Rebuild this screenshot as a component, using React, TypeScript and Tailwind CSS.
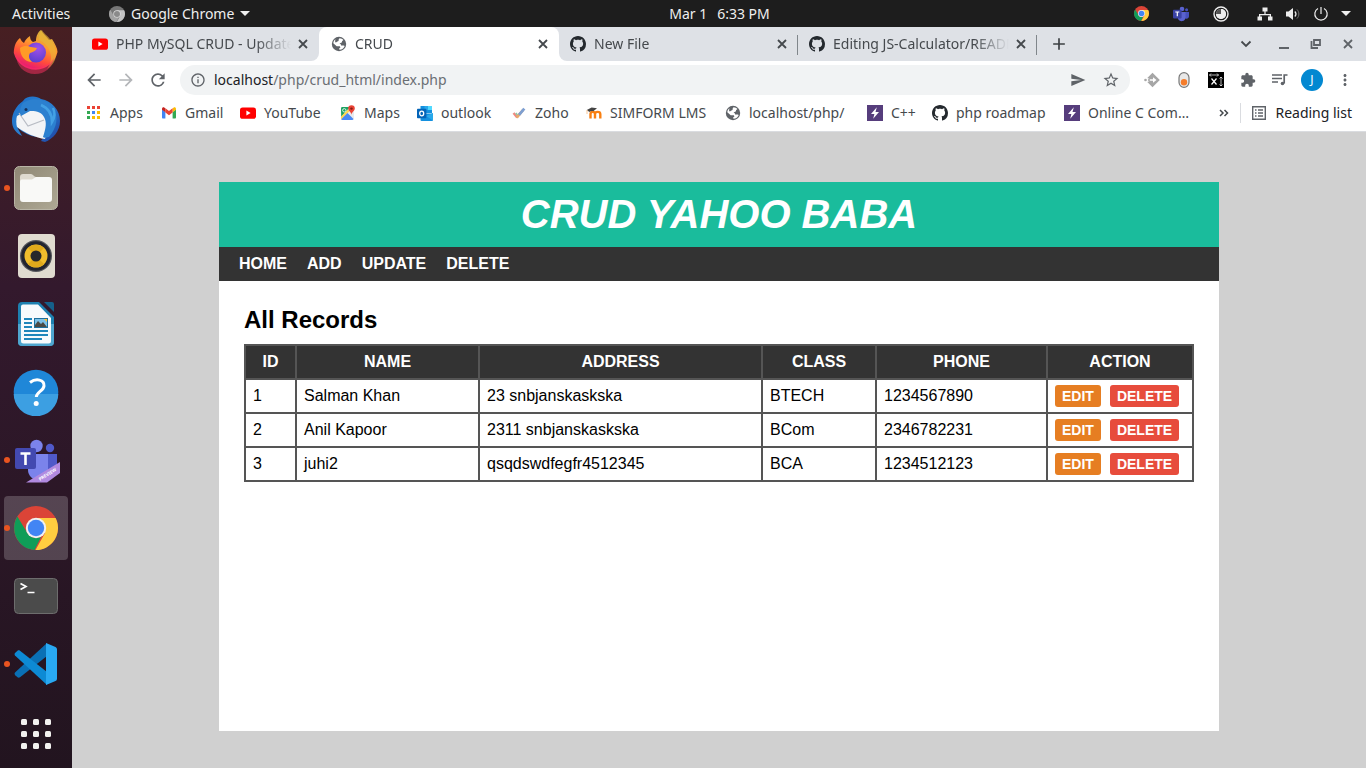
import type { ReactNode } from "react";
import {
  MdArrowBack,
  MdArrowForward,
  MdRefresh,
  MdInfoOutline,
  MdSend,
  MdStarBorder,
  MdExtension,
  MdMoreVert,
  MdAdd,
} from "react-icons/md";

/* ---------- small icons ---------- */

function Youtube() {
  return (
    <svg className="h-4 w-4 shrink-0" viewBox="0 0 16 16">
      <rect x="0" y="2.4" width="16" height="11.4" rx="2.6" fill="#f00" />
      <path d="M6.4 5.6v5l4.2-2.5z" fill="#fff" />
    </svg>
  );
}

function Globe() {
  return (
    <svg className="h-4 w-4 shrink-0" viewBox="0 0 16 16">
      <circle cx="8" cy="8" r="7.2" fill="#5f6368" />
      <path
        d="M8.6 2.2c1.5 0 2.9.7 3.8 1.8L11 5.2c.2 1-.5 1.6-1.5 1.7l-1 .9c1.5.2 1.7.9 1.5 1.8H12.7l1 .3c-.8 2.2-2.7 3.9-5.2 3.9l-.4-1.2 1.3-1.1-.5-1.200H5.7L2.3 7.2C2.4 5.6 3.2 4.2 4.4 3.3l-.3 2.2c.2 1 .9 1.2 1.5.6.5-.8 1.2-.7 1.9-1.1.4-.7-.1-1.4.4-2z"
        fill="#fff"
      />
    </svg>
  );
}

function Github() {
  return (
    <svg className="h-4 w-4 shrink-0" viewBox="0 0 16 16" fill="#24292e">
      <path d="M8 0C3.58 0 0 3.58 0 8c0 3.54 2.29 6.53 5.47 7.59.4.07.55-.17.55-.38 0-.19-.01-.82-.01-1.49-2.01.37-2.53-.49-2.69-.94-.09-.23-.48-.94-.82-1.13-.28-.15-.68-.52-.01-.53.63-.01 1.08.58 1.23.82.72 1.21 1.87.87 2.33.66.07-.52.28-.87.51-1.07-1.78-.2-3.64-.89-3.64-3.95 0-.87.31-1.59.82-2.15-.08-.2-.36-1.02.08-2.12 0 0 .67-.21 2.2.82.64-.18 1.32-.27 2-.27.68 0 1.36.09 2 .27 1.53-1.04 2.2-.82 2.2-.82.44 1.1.16 1.92.08 2.12.51.56.82 1.27.82 2.15 0 3.07-1.87 3.75-3.65 3.95.29.25.54.73.54 1.48 0 1.07-.01 1.93-.01 2.2 0 .21.15.46.55.38A8.01 8.01 0 0 0 16 8c0-4.42-3.58-8-8-8z" />
    </svg>
  );
}

function AppsIcon() {
  const colors = ["#ea4335", "#ea4335", "#ea4335", "#34a853", "#4285f4", "#fbbc04", "#34a853", "#fbbc04", "#fbbc04"];
  return (
    <svg className="h-4 w-4 shrink-0" viewBox="0 0 16 16">
      {colors.map((c, i) => (
        <rect key={i} x={1 + (i % 3) * 5} y={1 + Math.floor(i / 3) * 5} width="3" height="3" fill={c} />
      ))}
    </svg>
  );
}

function Gmail() {
  return (
    <svg className="h-4 w-4 shrink-0" viewBox="0 0 16 16">
      <path d="M1 4.5v8c0 .5.4 1 1 1h2.4V7z" fill="#4285f4" />
      <path d="M11.6 13.5H14c.6 0 1-.5 1-1v-8L11.6 7z" fill="#34a853" />
      <path d="M11.6 3.4V7.2L15 4.7V3.9c0-1.4-1.5-2-2.5-1.2z" fill="#fbbc04" />
      <path d="M4.4 7.6V3.2L8 5.9l3.6-2.7v4.4L8 10.3z" fill="#ea4335" />
      <path d="M1 3.9v.8l3.4 2.6V3.4l-.9-.7C2.5 1.9 1 2.5 1 3.9z" fill="#c5221f" />
    </svg>
  );
}

function Maps() {
  return (
    <svg className="h-4 w-4 shrink-0" viewBox="0 0 16 16">
      <rect x="1" y="2" width="13" height="13" rx="1.4" fill="#e8eaed" />
      <path d="M1 3.4C1 2.6 1.6 2 2.4 2H10L1.2 12z" fill="#1ea362" />
      <path d="M1 11.5l7-7L9.7 6 1 14.5z" fill="#ffd64f" />
      <path d="M1.2 14.2l6.3-6.3 6 6.1c-.3.7-.7 1-1.3 1H2.3c-.6 0-.9-.3-1.100-.8z" fill="#4a89f3" />
      <circle cx="4.3" cy="5.3" r="1.7" fill="none" stroke="#fff" strokeWidth=".8" />
      <path d="M11.5.3a3.3 3.3 0 0 0-3.3 3.3c0 2.4 2.7 3 3.3 6.2.6-3.2 3.300-3.800 3.300-6.200A3.300 3.300 0 0 0 11.500.3z" fill="#ea4335" />
      <circle cx="11.5" cy="3.6" r="1.2" fill="#851b14" />
    </svg>
  );
}

function Outlook() {
  return (
    <svg className="h-4 w-4 shrink-0" viewBox="0 0 16 16">
      <path d="M3.5 1H15v7H3.5z" fill="#1490df" />
      <path d="M7.500 1H15v4H7.500z" fill="#28a8ea" />
      <path d="M11 1h4v4h-4z" fill="#50d9ff" />
      <path d="M3.5 8.500H16V15a1 1 0 0 1-1 1H4.500a1 1 0 0 1-1-1z" fill="#1490df" />
      <path d="M16 8v7.500L9 11z" fill="#28a8ea" />
      <rect x="0" y="3.8" width="9.4" height="9.4" rx=".8" fill="#0364b8" />
      <ellipse cx="4.7" cy="8.5" rx="2" ry="2.300" fill="none" stroke="#fff" strokeWidth="1.3" />
    </svg>
  );
}

function Zoho() {
  return (
    <svg className="h-4 w-4 shrink-0" viewBox="0 0 16 16" fill="none">
      <path d="M2.500 8l3.700 4.500" stroke="#ef8a80" strokeWidth="2.400" />
      <path d="M4.800 8l2 2.500" stroke="#8ec9a0" strokeWidth="1.600" />
      <path d="M5.800 12.600L12 5" stroke="#e9a96a" strokeWidth="2.600" />
      <path d="M8 9.800l5.300-6.200" stroke="#7d9fd2" strokeWidth="2.800" />
    </svg>
  );
}

function Moodle() {
  return (
    <svg className="h-4 w-4 shrink-0" viewBox="0 0 16 16" fill="none">
      <path d="M4.500 13.500V9c0-2.900 4.500-2.900 4.500 0v4.500M9 9c0-2.900 5.300-2.900 5.300 0v4.500" stroke="#f98012" strokeWidth="2.400" />
      <path d="M.8 5l4.800-2.600L11 3.200 7.300 6.200c-1.600-.6-2.800-.3-3.900.8z" fill="#444" />
      <path d="M1 5v4" stroke="#f7b77c" strokeWidth=".8" />
    </svg>
  );
}

function Bolt() {
  return (
    <svg className="h-4 w-4 shrink-0" viewBox="0 0 16 16">
      <rect width="16" height="16" fill="#563d7c" />
      <path d="M9.800 2.200L4 9h3.400l-1.200 4.800L12 7H8.500z" fill="#fff" />
    </svg>
  );
}

function ChromeLogo({ className, muted = false }: { className: string; muted?: boolean }) {
  const [r, y, g, b] = muted ? ["#777", "#c4c4c4", "#a2a2a2", "#8a8a8a"] : ["#db4437", "#ffcd40", "#0f9d58", "#4285f4"];
  return (
    <svg className={className} viewBox="0 0 44 44">
      <circle cx="22" cy="22" r="22" fill={r} />
      <path d="M22 12h19.600A22 22 0 0 1 21.500 44L31 27z" fill={y} />
      <path d="M3.400 10.500L13.300 27c2 3.500 5.200 5 8.700 5l5-.9L20.500 44A22 22 0 0 1 3.400 10.500z" fill={g} />
      <circle cx="22" cy="22" r="10.200" fill={muted ? "#ddd" : "#f1f1f1"} />
      <circle cx="22" cy="22" r="8.200" fill={b} />
    </svg>
  );
}

function TeamsTray() {
  return (
    <svg className="size-4" viewBox="0 0 16 16">
      <circle cx="9" cy="3" r="2.300" fill="#5a62cf" />
      <circle cx="13.600" cy="3.800" r="1.500" fill="#4650bd" />
      <path d="M11 6h5v4.500a2.500 2.500 0 0 1-4 1.700z" fill="#4650bd" />
      <path d="M5 6h7.500v5.500a4 4 0 0 1-7.500 1.600z" fill="#5a62cf" />
      <rect x="0" y="3.800" width="8.600" height="8.600" rx=".8" fill="#3b43a6" />
      <path d="M2.300 6h4M4.300 6v4.300" stroke="#fff" strokeWidth="1.200" />
    </svg>
  );
}

function Cross({ className }: { className: string }) {
  return (
    <svg className={className} viewBox="0 0 16 16" stroke="currentColor" strokeWidth="1.800">
      <path d="M4 4l8 8M12 4l-8 8" />
    </svg>
  );
}

/* ---------- dock icons ---------- */

function Firefox() {
  return (
    <svg className="size-12" viewBox="0 0 48 48">
      <defs>
        <linearGradient id="fx" x1=".8" y1="0" x2=".35" y2="1">
          <stop offset="0" stopColor="#c9b33f" />
          <stop offset=".4" stopColor="#ff9a2e" />
          <stop offset=".72" stopColor="#ff4a3d" />
          <stop offset="1" stopColor="#e4127c" />
        </linearGradient>
        <radialGradient id="fxc" cx=".6" cy=".3" r=".7">
          <stop offset="0" stopColor="#a050e8" />
          <stop offset="1" stopColor="#5b3fd0" />
        </radialGradient>
      </defs>
      <path d="M8 10c1 2 2 4 4 5 1-3 3-5 6-7 0 3 1 5 3 6l3-1c0-5 2-9 5-11 2 4 5 6 8 10l3-1c3 5 5.500 9 5.500 13A22.500 22.500 0 0 1 1.800 25C2 18 4 13 8 10z" fill="url(#fx)" />
      <path d="M27 12c-1-4 1-8 3-10 2 5 14 10 14 24 0 7-4 12-9 15 4-6 5-11 3-17-2-7-7-10-11-12z" fill="#e8b838" opacity=".6" />
      <circle cx="24" cy="24.500" r="10" fill="url(#fxc)" />
      <path d="M8 20c4-3 8-2 11-1l6 1c-1 3-4 4-7 5-2 3-1 6 2 9-7 0-12-6-12-14z" fill="#ff9b27" />
      <path d="M4 26c3 9 11 14 20 14 8 0 14-4 18-10-2 10-9 16-19 16C12 46 4 38 4 26z" fill="#ff2f62" opacity=".5" />
    </svg>
  );
}

function Thunderbird() {
  return (
    <svg className="size-12" viewBox="0 0 48 48">
      <defs>
        <linearGradient id="tb" x1="0" y1="0" x2="1" y2="1">
          <stop offset="0" stopColor="#1c6fc9" />
          <stop offset=".5" stopColor="#2a7ecf" />
          <stop offset="1" stopColor="#1e3fa0" />
        </linearGradient>
      </defs>
      <path d="M11 5c4-6 14-5 18-2 11 2 19 11 19 22 0 10-7 18-15 21l-4-1 4-5C23 43 12 38 5 31l5 9C2 36 0 30 0 25 0 17 4 10 11 5z" fill="url(#tb)" />
      <path d="M5 20l9-5 18-2c4 5 5 20 1 30-9-1-20-6-28-12-1-3-1-8 0-11z" fill="#f3f4f6" />
      <path d="M7 17l9 13 16-6" fill="none" stroke="#b8bcc4" strokeWidth="1.200" />
      <path d="M11 7c9-7 24-4 30 5 6 8 4 20-4 29-4 1-5 1-6 0 3-9 4-15 1-20-3-6-10-6-14-6L9 20c-2-5 0-10 2-13z" fill="#2c80cf" />
      <path d="M29 9c7 3 11 9 11 17 3-5 3-10 1-14" fill="none" stroke="#43a1e5" strokeWidth="2.500" />
      <circle cx="14" cy="13.500" r="1.500" fill="#14305c" />
    </svg>
  );
}

function Files() {
  return (
    <svg className="size-12" viewBox="0 0 48 48">
      <defs>
        <linearGradient id="fl" x1="0" y1="0" x2="1" y2="1">
          <stop offset="0" stopColor="#8f8875" />
          <stop offset="1" stopColor="#aea894" />
        </linearGradient>
      </defs>
      <rect x="2.500" y="2.500" width="43" height="43" rx="5" fill="url(#fl)" stroke="#b9b5a6" />
      <path d="M8 13a3 3 0 0 1 3-3h8c2 0 3 3 5 3v6H8z" fill="#dedacf" />
      <path d="M8 18c0-2 1-2.500 3-2.500h9l4-2.500h13a3 3 0 0 1 3 3v19a3 3 0 0 1-3 3H11a3 3 0 0 1-3-3z" fill="#f9f9f7" />
    </svg>
  );
}

function Rhythmbox() {
  return (
    <svg className="size-12" viewBox="0 0 48 48">
      <rect x="6" y="2" width="37" height="44" rx="4" fill="#e0dbd0" />
      <circle cx="24" cy="24" r="16" fill="#55565c" />
      <circle cx="24" cy="24" r="14.800" fill="#22242f" />
      <circle cx="24" cy="24" r="11.500" fill="#f0bd2c" />
      <path d="M16 16a11.500 11.500 0 0 1 16 0L24 24zM16 32a11.500 11.500 0 0 0 16 0L24 24z" fill="#dfa91c" />
      <circle cx="24" cy="24" r="5.500" fill="#26282b" />
    </svg>
  );
}

function Writer() {
  return (
    <svg className="size-12" viewBox="0 0 48 48">
      <path d="M10 2h17l15 15v25a4 4 0 0 1-4 4H10a4 4 0 0 1-4-4V6a4 4 0 0 1 4-4z" fill="#1d80b0" />
      <path d="M6 24h36v18a4 4 0 0 1-4 4H10a4 4 0 0 1-4-4z" fill="#4fa6cf" />
      <path d="M32 2h8a2 2 0 0 1 2 2v8z" fill="#15608a" />
      <path d="M11 4.500h15L39 18v23a2.500 2.500 0 0 1-2.500 2.500h-25A2.500 2.500 0 0 1 9 41V6.500a2 2 0 0 1 2-2z" fill="#f7fafc" />
      <path d="M12 19h8M12 23h8M12 27h8M12 31h24M12 35h24M12 39h18" stroke="#1f86bb" strokeWidth="2" />
      <rect x="22.500" y="18.500" width="13" height="9" fill="#7cc0e6" stroke="#1d6f9c" />
      <path d="M23 27v-2l3-4 3 3 2-2 4 5z" fill="#4a4a44" />
      <path d="M32 19h3v3z" fill="#ffc02e" />
    </svg>
  );
}

function Help() {
  return (
    <svg className="size-12" viewBox="0 0 48 48">
      <circle cx="24" cy="24" r="22.300" fill="#1f87d8" />
      <path d="M1.700 26h44.600a22.300 22.300 0 0 1-44.600 0z" fill="#3c9fe2" />
      <path d="M18 14.500c6-4.500 14.500-3 14 3.500-.5 5-7.500 6-7.700 11" fill="none" stroke="#fff" strokeWidth="3" />
      <circle cx="24.200" cy="35.500" r="2.500" fill="#fff" />
    </svg>
  );
}

function Teams() {
  return (
    <svg className="size-12" viewBox="0 0 48 48">
      <circle cx="24.500" cy="10" r="6.200" fill="#7b83eb" />
      <circle cx="38" cy="12" r="4.200" fill="#5059c9" />
      <path d="M33 18h12v14a7 7 0 0 1-12 5z" fill="#5059c9" />
      <path d="M16 18h20v15c0 7-5 11-10 11s-10-4-10-10z" fill="#7b83eb" />
      <rect x="3" y="12" width="21" height="21" rx="2" fill="#4349b0" />
      <path d="M8.500 17.500h10M13.500 17.500v11.500" stroke="#fff" strokeWidth="2.600" />
      <path d="M14 46.500L48 26v11L35 46.500z" fill="#b18ae0" />
      <text x="28" y="45" fontSize="4.500" fontWeight="700" fill="#fff" fontFamily="Noto Sans, sans-serif" transform="rotate(-32 28 45)">
        PREVIEW
      </text>
    </svg>
  );
}

function Terminal() {
  return (
    <svg className="size-12" viewBox="0 0 48 48">
      <rect x="2.500" y="6.500" width="43" height="35" rx="4" fill="#4b4b4b" stroke="#6d6d6d" />
      <path d="M8.500 11.500l5.500 3-5.500 3M15.500 20.500h7" fill="none" stroke="#fff" strokeWidth="1.700" />
    </svg>
  );
}

function VsCode() {
  return (
    <svg className="size-12" viewBox="0 0 48 48">
      <path d="M3 32.500c-.8.800-.4 2 .3 2.700l2.200 2c.7.600 1.700.6 2.500 0L35 16V3z" fill="#0a70b5" />
      <path d="M3 15.500c-.8-.8-.4-2 .3-2.700l2.200-2c.7-.6 1.700-.6 2.500 0L35 32v13z" fill="#0d8ad4" />
      <path d="M34 3l9.500 4a2.500 2.500 0 0 1 1.500 2.300v29.400a2.500 2.500 0 0 1-1.500 2.300L34 45z" fill="#29a9f2" />
    </svg>
  );
}

function ShowApps() {
  return (
    <svg className="size-12" viewBox="0 0 48 48" fill="#f2f1ef">
      {[0, 1, 2, 3, 4, 5, 6, 7, 8].map((i) => (
        <rect key={i} x={9 + (i % 3) * 12} y={9 + Math.floor(i / 3) * 12} width="6" height="6" rx="1.500" />
      ))}
    </svg>
  );
}

/* ---------- shell ---------- */

function TopBar() {
  return (
    <header className="relative z-10 grid h-[27px] grid-cols-[1fr_auto_1fr] items-center bg-[#1d1d1d] text-sm text-[#efefef]">
      <div className="flex items-center pl-3">
        <button className="w-[97px] text-left">Activities</button>
        <button className="flex items-center gap-1.5">
          <ChromeLogo className="size-4" muted />
          Google Chrome
          <svg className="h-[5px] w-[10px]" viewBox="0 0 10 5" fill="#efefef">
            <path d="M0 0h10L5 5z" />
          </svg>
        </button>
      </div>
      <button className="flex gap-2.5 pl-[73px]">
        <span>Mar 1</span>
        <span>6:33 PM</span>
      </button>
      <div className="flex items-center justify-end pr-[15px]">
        <button aria-label="Chrome" className="mr-6">
          <ChromeLogo className="size-[15px]" />
        </button>
        <button aria-label="Teams" className="mr-6">
          <TeamsTray />
        </button>
        <button aria-label="Timer" className="mr-7">
          <svg className="size-4" viewBox="0 0 16 16">
            <circle cx="8" cy="8" r="7" fill="none" stroke="#eee" strokeWidth="1.400" />
            <path d="M8 8V3a5 5 0 1 1-5 5z" fill="#eee" />
            <circle cx="8" cy="8" r="5" fill="#eee" />
            <path d="M8 8V3a5 5 0 0 0-5 5z" fill="#555" />
          </svg>
        </button>
        <button aria-label="System menu" className="flex items-center gap-3">
          <svg className="size-4" viewBox="0 0 16 16" fill="#eee">
            <path d="M5.500 1.500h5v4H8.600V8H14v2.500h1.500v4H11v-4h1.700V9.300H3.300v1.200H5v4H.5v-4H2V8h5.400V5.500H5.500z" />
          </svg>
          <svg className="size-4" viewBox="0 0 16 16" fill="none" stroke="#eee">
            <path d="M1 5.500h2.500L8 2v12l-4.500-3.500H1z" fill="#eee" stroke="none" />
            <path d="M9.800 5.500c1.400 1.500 1.400 3.500 0 5" strokeWidth="1.300" />
            <path d="M12 3.500c2.500 2.700 2.500 6.300 0 9" stroke="#777" />
          </svg>
          <svg className="size-4" viewBox="0 0 16 16" fill="none" stroke="#eee" strokeWidth="1.200">
            <path d="M5 2.500a6.200 6.200 0 1 0 6 0M8 1v7" />
          </svg>
          <svg className="h-[5px] w-[10px]" viewBox="0 0 10 5" fill="#efefef">
            <path d="M0 0h10L5 5z" />
          </svg>
        </button>
      </div>
    </header>
  );
}

const dockItems: { name: string; icon: ReactNode; running?: boolean; active?: boolean }[] = [
  { name: "Firefox", icon: <Firefox /> },
  { name: "Thunderbird", icon: <Thunderbird /> },
  { name: "Files", icon: <Files />, running: true },
  { name: "Rhythmbox", icon: <Rhythmbox /> },
  { name: "Writer", icon: <Writer /> },
  { name: "Help", icon: <Help /> },
  { name: "Teams", icon: <Teams />, running: true },
  { name: "Google Chrome", icon: <ChromeLogo className="size-11" />, running: true, active: true },
  { name: "Terminal", icon: <Terminal /> },
  { name: "Visual Studio Code", icon: <VsCode />, running: true },
];

function Dock() {
  return (
    <aside className="flex w-[72px] shrink-0 flex-col justify-between bg-linear-to-b from-[#471f22] via-[#33192d] via-35% to-[#22141f] px-1 pb-0.5">
      <ul className="-mt-[7px] flex flex-col gap-1">
        {dockItems.map((d) => (
          <li key={d.name}>
            <button
              aria-label={d.name}
              className={`relative flex size-16 items-center justify-center rounded ${d.active ? "bg-white/20" : ""}`}
            >
              {d.running && <span className="absolute top-[29px] left-0 size-1.5 rounded-full bg-[#e95420]" />}
              {d.icon}
            </button>
          </li>
        ))}
      </ul>
      <button aria-label="Show applications" className="flex size-16 items-center justify-center">
        <ShowApps />
      </button>
    </aside>
  );
}

const tabs = [
  { title: "PHP MySQL CRUD - Update", icon: <Youtube />, shape: "w-[247px] bg-[#dee1e6] rounded-br-lg pl-5 pr-2" },
  { title: "CRUD", icon: <Globe />, shape: "w-[240px] bg-white rounded-t-lg pl-3 pr-2" },
  { title: "New File", icon: <Github />, shape: "w-[239px] bg-[#dee1e6] rounded-bl-lg pl-[11px] pr-2", divider: true },
  { title: "Editing JS-Calculator/README", icon: <Github />, shape: "w-[239px] bg-[#dee1e6] pl-[11px] pr-2", divider: true },
];

function TabStrip() {
  return (
    <div className="flex h-[34px] bg-[#dee1e6]">
      <div className="flex bg-white">
        {tabs.map((t, i) => (
          <div key={t.title} className={i === 1 ? "bg-[#dee1e6]" : ""}>
            <div className={`relative flex h-full items-center text-sm text-[#45494d] ${t.shape}`}>
              {t.icon}
              <span className="ml-2 flex-1 overflow-hidden mask-r-from-80% whitespace-nowrap">{t.title}</span>
              <button aria-label={`Close ${t.title}`} className="ml-1">
                <Cross className="size-4" />
              </button>
              {t.divider && <span className="absolute top-2 right-0 h-5 w-px bg-[#80868b]" />}
            </div>
          </div>
        ))}
      </div>
      <button aria-label="New tab" className="ml-3 text-[#3c4043]">
        <MdAdd className="size-5" />
      </button>
      <div className="ml-auto flex items-center gap-4 pr-[10px] text-[#5f6368]">
        <button aria-label="Search tabs">
          <svg className="size-4" viewBox="0 0 16 16" fill="none" stroke="#45494d" strokeWidth="1.800">
            <path d="M3.500 5.500L8 10l4.500-4.500" />
          </svg>
        </button>
        <button aria-label="Minimize" className="ml-1.5">
          <svg className="size-4" viewBox="0 0 16 16">
            <path d="M3 12h10" stroke="currentColor" strokeWidth="2" />
          </svg>
        </button>
        <button aria-label="Restore">
          <svg className="size-4" viewBox="0 0 16 16" fill="none" stroke="currentColor" strokeWidth="1.800">
            <path d="M6 4h6v5H6zM3.500 5v7H10" />
          </svg>
        </button>
        <button aria-label="Close window">
          <Cross className="size-4" />
        </button>
      </div>
    </div>
  );
}

function Toolbar() {
  return (
    <div className="flex h-[38px] items-center bg-white pr-3 pl-3 text-[#5f6368]">
      <button aria-label="Back">
        <MdArrowBack className="size-5" />
      </button>
      <button aria-label="Forward" className="ml-3 text-[#b4b6b9]">
        <MdArrowForward className="size-5" />
      </button>
      <button aria-label="Reload" className="ml-3">
        <MdRefresh className="size-5" />
      </button>
      <div className="ml-3 flex h-[30px] flex-1 items-center rounded-full bg-[#f1f3f4] px-2.5">
        <MdInfoOutline className="size-4" />
        <span className="ml-2 flex-1 text-sm text-[#6a6e73]">
          <span className="text-[#202124]">localhost</span>/php/crud_html/index.php
        </span>
        <button aria-label="Share">
          <MdSend className="size-4" />
        </button>
        <button aria-label="Bookmark" className="ml-4">
          <MdStarBorder className="size-[18px]" />
        </button>
      </div>
      <div className="ml-3.5 flex items-center gap-4">
        <button aria-label="Tag assistant">
          <svg className="size-4" viewBox="0 0 16 16">
            <path d="M8.500.7l7.300 7.300-7.300 7.300L3.300 10l3-1.200H9v2l3.500-2.800L9 5.200v2H6.300L3.300 6z" fill="#a6a6a6" />
            <circle cx="1.500" cy="8" r="1.300" fill="#a6a6a6" />
            <circle cx="5" cy="8" r="1.100" fill="#a6a6a6" />
          </svg>
        </button>
        <button aria-label="Toggle extension">
          <svg className="size-4" viewBox="0 0 16 16">
            <rect x="3" y=".7" width="10" height="14.600" rx="5" fill="#e8e8e8" stroke="#777" strokeWidth="1.200" />
            <circle cx="8" cy="10.300" r="3.200" fill="#f57c2a" />
          </svg>
        </button>
        <button aria-label="Image size">
          <svg className="size-4" viewBox="0 0 16 16" fill="none" stroke="#fff">
            <rect width="16" height="16" fill="#000" stroke="none" />
            <path d="M3.500 6.500l5 6M8.500 6.500l-5 6" strokeWidth="1.200" />
            <path d="M1.500 3h9M3 1.500L1.500 3 3 4.500M9 1.500L10.500 3 9 4.500M13 5v9M11.500 6.500L13 5l1.500 1.500M11.500 12.500L13 14l1.500-1.500" strokeWidth=".7" />
          </svg>
        </button>
        <button aria-label="Extensions">
          <MdExtension className="size-4" />
        </button>
        <button aria-label="Media controls">
          <svg className="size-4" viewBox="0 0 16 16" fill="none" stroke="currentColor" strokeWidth="1.700">
            <path d="M0 3h10M0 6.500h10M0 10h6" />
            <circle cx="10.500" cy="11.500" r="1.800" fill="currentColor" stroke="none" />
            <path d="M12.200 11.500V3H15.500" />
          </svg>
        </button>
        <button aria-label="Profile" className="-mx-[3px] flex size-[22px] items-center justify-center rounded-full bg-[#0288d1] text-xs text-white">
          J
        </button>
        <button aria-label="Menu">
          <MdMoreVert className="size-[18px]" />
        </button>
      </div>
    </div>
  );
}

const bookmarks: { label: string; icon: ReactNode; width: string }[] = [
  { label: "Apps", icon: <AppsIcon />, width: "w-[75px]" },
  { label: "Gmail", icon: <Gmail />, width: "w-[79px]" },
  { label: "YouTube", icon: <Youtube />, width: "w-[100px]" },
  { label: "Maps", icon: <Maps />, width: "w-[77px]" },
  { label: "outlook", icon: <Outlook />, width: "w-[94px]" },
  { label: "Zoho", icon: <Zoho />, width: "w-[75px]" },
  { label: "SIMFORM LMS", icon: <Moodle />, width: "w-[139px]" },
  { label: "localhost/php/", icon: <Globe />, width: "w-[142px]" },
  { label: "C++", icon: <Bolt />, width: "w-[65px]" },
  { label: "php roadmap", icon: <Github />, width: "w-[132px]" },
  { label: "Online C Com…", icon: <Bolt />, width: "w-[140px]" },
];

function BookmarksBar() {
  return (
    <nav className="flex h-[33px] items-center border-b border-[#dadce0] bg-white pr-3.5 pb-1 pl-3.5 text-sm text-[#45494d]">
      {bookmarks.map((b) => (
        <a key={b.label} href="#" className={`flex shrink-0 items-center gap-2 whitespace-nowrap ${b.width}`}>
          {b.icon}
          {b.label}
        </a>
      ))}
      <button aria-label="More bookmarks" className="ml-auto">
        <svg className="size-4" viewBox="0 0 16 16" fill="none" stroke="currentColor" strokeWidth="1.500">
          <path d="M4 5l3 3-3 3M8.500 5l3 3-3 3" />
        </svg>
      </button>
      <button className="ml-2 flex items-center gap-2 border-l border-[#dadce0] pl-2.5 whitespace-nowrap text-[#202124]">
        <svg className="size-4" viewBox="0 0 16 16" fill="none" stroke="#5f6368" strokeWidth="1.400">
          <path d="M1.700 1.700h12.600v12.600H1.700zM4 5h1.500M7 5h5M4 8h1.500M7 8h5M4 11h1.500M7 11h5" />
        </svg>
        Reading list
      </button>
    </nav>
  );
}

/* ---------- page ---------- */

const records = [
  { id: 1, name: "Salman Khan", address: "23 snbjanskaskska", cls: "BTECH", phone: "1234567890" },
  { id: 2, name: "Anil Kapoor", address: "2311 snbjanskaskska", cls: "BCom", phone: "2346782231" },
  { id: 3, name: "juhi2", address: "qsqdswdfegfr4512345", cls: "BCA", phone: "1234512123" },
];

const columns = [
  { title: "ID", width: "w-[51px]" },
  { title: "NAME", width: "w-[183px]" },
  { title: "ADDRESS", width: "w-[283px]" },
  { title: "CLASS", width: "w-[114px]" },
  { title: "PHONE", width: "w-[171px]" },
  { title: "ACTION", width: "" },
];

function CrudPage() {
  const cell = "border-2 border-[#555] px-[7px]";
  return (
    <main className="flex-1 bg-[#d0d0d0] pt-[50px] pb-9 font-['Liberation_Sans',Arial,sans-serif] text-base text-black">
      <div className="mx-auto max-w-[1000px] bg-white">
        <h1 className="bg-[#1abc9c] py-2.5 text-center text-[40px] leading-[45px] font-bold text-white italic">
          CRUD YAHOO BABA
        </h1>
        <nav className="flex h-[34px] items-center bg-[#333] px-2.5 font-bold text-white">
          {["HOME", "ADD", "UPDATE", "DELETE"].map((l) => (
            <a key={l} href="#" className="px-2.5">
              {l}
            </a>
          ))}
        </nav>
        <section className="min-h-[450px] p-[25px]">
          <h2 className="mb-2.5 text-2xl leading-7 font-bold">All Records</h2>
          <table className="w-full table-fixed border-collapse">
            <thead>
              <tr className="h-[34px] bg-[#333] text-white">
                {columns.map((c) => (
                  <th key={c.title} className={`${cell} ${c.width}`}>
                    {c.title}
                  </th>
                ))}
              </tr>
            </thead>
            <tbody>
              {records.map((r) => (
                <tr key={r.id} className="h-[34px]">
                  <td className={cell}>{r.id}</td>
                  <td className={cell}>{r.name}</td>
                  <td className={cell}>{r.address}</td>
                  <td className={cell}>{r.cls}</td>
                  <td className={cell}>{r.phone}</td>
                  <td className={cell}>
                    <div className="flex gap-[9px] text-sm leading-[22px] font-bold text-white">
                      <a href="#" className="rounded-[3px] bg-[#e67e22] px-[7px]">
                        EDIT
                      </a>
                      <a href="#" className="rounded-[3px] bg-[#e74c3c] px-[7px]">
                        DELETE
                      </a>
                    </div>
                  </td>
                </tr>
              ))}
            </tbody>
          </table>
        </section>
      </div>
    </main>
  );
}

export default function App() {
  return (
    <div className="flex min-h-screen flex-col overflow-x-hidden font-['Noto_Sans','Open_Sans',sans-serif]">
      <TopBar />
      <div className="flex flex-1">
        <Dock />
        <div className="flex min-w-0 flex-1 flex-col">
          <TabStrip />
          <Toolbar />
          <BookmarksBar />
          <CrudPage />
        </div>
      </div>
    </div>
  );
}
